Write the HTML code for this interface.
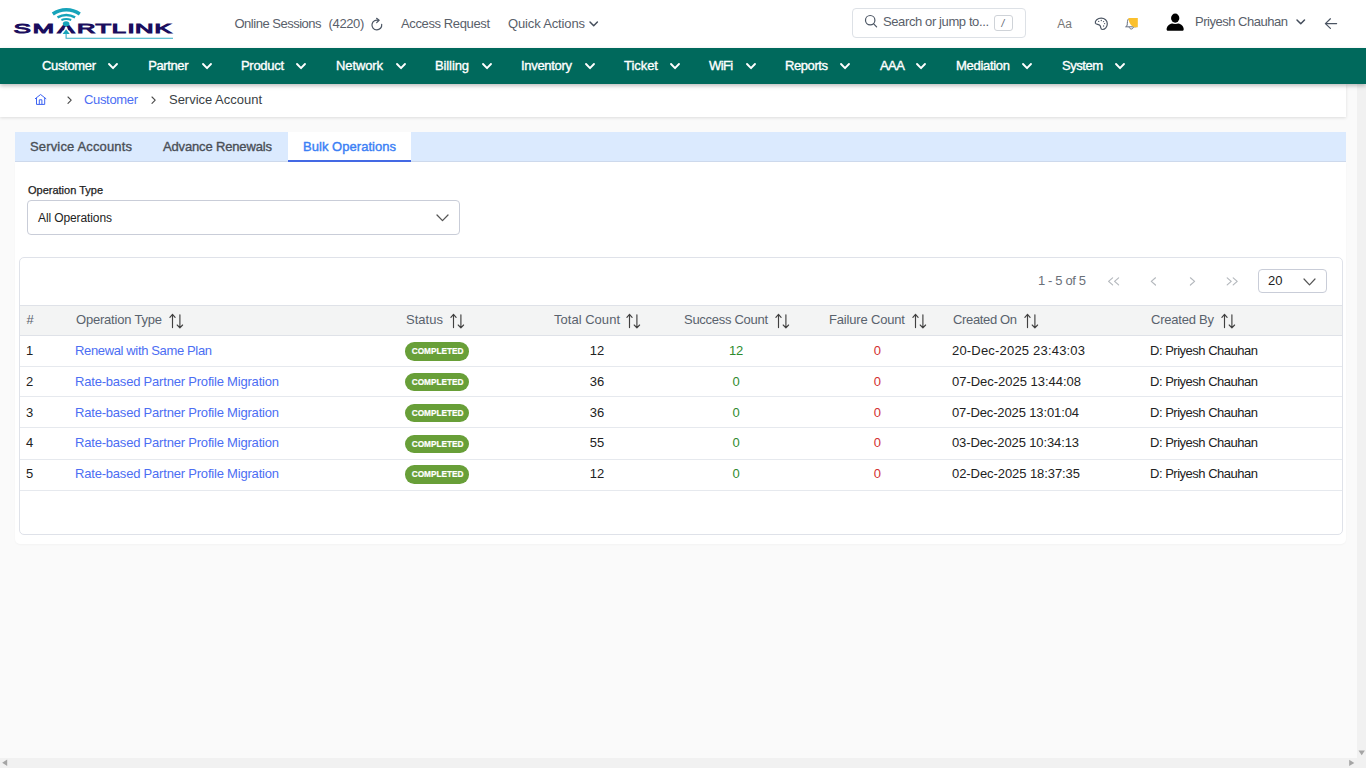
<!DOCTYPE html>
<html lang="en">
<head>
<meta charset="utf-8">
<title>Service Account - Bulk Operations</title>
<style>
*{box-sizing:border-box;margin:0;padding:0}
html,body{width:1366px;height:768px;overflow:hidden;background:#fafafa;font-family:"Liberation Sans",sans-serif;font-size:13px;color:#333}
#root{position:relative;width:1366px;height:768px;overflow:hidden}
.abs{position:absolute}
.t{z-index:2;position:absolute;white-space:nowrap;line-height:16px;height:16px}
svg{position:absolute;overflow:visible}
/* header */
#hdr{left:0;top:0;width:1366px;height:48px;background:#fff}
.ht{color:#59606a;font-size:13px}
/* nav */
#nav{z-index:3;left:0;top:48px;width:1366px;height:36px;background:#00695c;box-shadow:0 2px 4px rgba(0,0,0,.25)}
.nt{z-index:4;color:#fff;font-size:13px;top:10px;-webkit-text-stroke:.35px #fff}
/* breadcrumb */
#bc{left:0;top:84px;width:1346px;height:33px;background:#fff;box-shadow:0 1px 3px rgba(0,0,0,.12)}
/* scrollbars */
#vsb{left:1357.2px;top:84px;width:9px;height:684px;background:#f1f1f1}
#hsb{left:0;top:758px;width:1366px;height:10px;background:#f1f1f1}
/* tabs */
#tabs{left:15.2px;top:132px;width:1330.5px;height:30px;background:#dbeafe;border-bottom:1px solid #cdd9ec}
#tabact{left:287.6px;top:132px;width:123.3px;height:29.6px;background:#fff;border-bottom:2px solid #4469e4}
.tab{font-size:13px;color:#4a4f57;top:139px;-webkit-text-stroke:.35px #4a4f57}
#panel{left:15.2px;top:162px;width:1330.5px;height:382.2px;background:#fff;border-radius:0 0 5px 5px;box-shadow:0 1px 2px rgba(0,0,0,.03)}
#sel{left:27px;top:200.2px;width:433px;height:34.4px;border:1px solid #c9cdd8;border-radius:4px;background:#fff}
#card{left:19px;top:256.5px;width:1324px;height:278.5px;border:1px solid #dfe2e9;border-radius:5px;background:#fff}
#thead{left:20px;top:305px;width:1322px;height:31px;background:#f3f4f4;border-top:1px solid #dfe2e8;border-bottom:1px solid #dfe2e8}
.rl{left:20px;width:1322px;height:1px;background:#e6e9ee}
.th{font-size:13px;color:#59626d;top:312px}
.td{font-size:13px;color:#222}
.lnk{color:#4c6ef3}
.g{color:#2e8b2e}
.r{color:#d32f2f}
.badge{position:absolute;left:405px;width:64.3px;height:18.4px;border-radius:9.2px;background:#689f38;color:#fff;font-size:8.8px;font-weight:bold;line-height:18.6px;text-align:center;z-index:2}
.badge span{display:inline-block;transform:scaleX(.94);transform-origin:50% 50%;margin:0 -4px;-webkit-text-stroke:.2px #fff}
#psel{left:1258px;top:269px;width:68.6px;height:24.4px;border:1px solid #c9cdd8;border-radius:4px;background:#fff}
</style>
</head>
<body>
<div id="root">
<div id="hdr" class="abs"></div>
<div id="nav" class="abs"></div>
<div id="bc" class="abs"></div>
<div id="vsb" class="abs"></div>
<div id="hsb" class="abs"></div>
<div id="tabs" class="abs"></div>
<div id="tabact" class="abs"></div>
<div id="panel" class="abs"></div>
<div id="sel" class="abs"></div>
<div id="card" class="abs"></div>
<div id="thead" class="abs"></div>
<div id="psel" class="abs"></div>
<span class="t ht" style="left:234.50px;top:15.50px;font-size:13px;letter-spacing:-0.490px;">Online Sessions</span>
<span class="t ht" style="left:328.60px;top:15.50px;font-size:13px;letter-spacing:-0.376px;">(4220)</span>
<span class="t ht" style="left:401.00px;top:15.50px;font-size:13px;letter-spacing:-0.380px;">Access Request</span>
<span class="t ht" style="left:508.00px;top:15.50px;font-size:13px;letter-spacing:-0.147px;">Quick Actions</span>
<span class="t ht" style="left:883.00px;top:13.50px;font-size:13px;letter-spacing:-0.392px;">Search or jump to...</span>
<span class="t ht" style="left:1001.50px;top:15.84px;font-size:10px;letter-spacing:0.000px;font-style:italic">/</span>
<span class="t ht" style="left:1057.30px;top:16.14px;font-size:12px;letter-spacing:0.000px;color:#777">Aa</span>
<span class="t ht" style="left:1195.00px;top:13.50px;font-size:13px;letter-spacing:-0.481px;">Priyesh Chauhan</span>
<span class="t nt" style="left:42.00px;top:57.50px;font-size:13px;letter-spacing:-0.337px;">Customer</span>
<span class="t nt" style="left:148.20px;top:57.50px;font-size:13px;letter-spacing:-0.390px;">Partner</span>
<span class="t nt" style="left:241.00px;top:57.50px;font-size:13px;letter-spacing:-0.302px;">Product</span>
<span class="t nt" style="left:336.00px;top:57.50px;font-size:13px;letter-spacing:-0.115px;">Network</span>
<span class="t nt" style="left:435.00px;top:57.50px;font-size:13px;letter-spacing:-0.115px;">Billing</span>
<span class="t nt" style="left:521.00px;top:57.50px;font-size:13px;letter-spacing:-0.311px;">Inventory</span>
<span class="t nt" style="left:624.00px;top:57.50px;font-size:13px;letter-spacing:-0.041px;">Ticket</span>
<span class="t nt" style="left:709.00px;top:57.50px;font-size:13px;letter-spacing:-0.600px;">WiFi</span>
<span class="t nt" style="left:785.00px;top:57.50px;font-size:13px;letter-spacing:-0.422px;">Reports</span>
<span class="t nt" style="left:880.00px;top:57.50px;font-size:13px;letter-spacing:-0.600px;">AAA</span>
<span class="t nt" style="left:956.00px;top:57.50px;font-size:13px;letter-spacing:-0.297px;">Mediation</span>
<span class="t nt" style="left:1062.00px;top:57.50px;font-size:13px;letter-spacing:-0.469px;">System</span>
<span class="t lnk" style="left:84.00px;top:91.50px;font-size:13px;letter-spacing:-0.337px;">Customer</span>
<span class="t " style="left:169.00px;top:91.50px;font-size:13px;letter-spacing:-0.016px;color:#3a3f45">Service Account</span>
<span class="t tab" style="left:30.00px;top:138.50px;font-size:13px;letter-spacing:0.152px;">Service Accounts</span>
<span class="t tab" style="left:163.00px;top:138.50px;font-size:13px;letter-spacing:-0.153px;">Advance Renewals</span>
<span class="t tab" style="left:303.00px;top:138.50px;font-size:13px;letter-spacing:0.036px;color:#3b7ff5;-webkit-text-stroke:.4px #3b7ff5">Bulk Operations</span>
<span class="t " style="left:28.00px;top:182.19px;font-size:11px;letter-spacing:-0.001px;color:#222;-webkit-text-stroke:.25px #222">Operation Type</span>
<span class="t " style="left:38.00px;top:209.84px;font-size:12px;letter-spacing:-0.106px;color:#222">All Operations</span>
<span class="t " style="left:1038.00px;top:273.00px;font-size:13px;letter-spacing:-0.368px;color:#6a7079">1 - 5 of 5</span>
<span class="t " style="left:1268.00px;top:273.00px;font-size:13px;letter-spacing:0.000px;color:#222">20</span>
<span class="t th" style="left:26.50px;top:312.00px;font-size:13px;letter-spacing:0.000px;">#</span>
<span class="t th" style="left:76.00px;top:312.00px;font-size:13px;letter-spacing:-0.204px;">Operation Type</span>
<span class="t th" style="left:406.00px;top:312.00px;font-size:13px;letter-spacing:0.028px;">Status</span>
<span class="t th" style="left:554.00px;top:312.00px;font-size:13px;letter-spacing:0.023px;">Total Count</span>
<span class="t th" style="left:684.00px;top:312.00px;font-size:13px;letter-spacing:-0.286px;">Success Count</span>
<span class="t th" style="left:829.00px;top:312.00px;font-size:13px;letter-spacing:-0.171px;">Failure Count</span>
<span class="t th" style="left:953.00px;top:312.00px;font-size:13px;letter-spacing:-0.356px;">Created On</span>
<span class="t th" style="left:1151.00px;top:312.00px;font-size:13px;letter-spacing:-0.227px;">Created By</span>
<span class="t td" style="left:26.00px;top:343.00px;font-size:13px;letter-spacing:0.000px;">1</span>
<span class="t td lnk" style="left:75.00px;top:343.00px;font-size:13px;letter-spacing:-0.359px;">Renewal with Same Plan</span>
<span class="t td" style="left:589.70px;top:343.00px;font-size:13px;letter-spacing:0.000px;">12</span>
<span class="t td g" style="left:728.90px;top:343.00px;font-size:13px;letter-spacing:0.000px;">12</span>
<span class="t td r" style="left:873.80px;top:343.00px;font-size:13px;letter-spacing:0.000px;">0</span>
<span class="t td" style="left:952.00px;top:343.00px;font-size:13px;letter-spacing:0.191px;">20-Dec-2025 23:43:03</span>
<span class="t td" style="left:1150.00px;top:343.00px;font-size:13px;letter-spacing:-0.491px;">D: Priyesh Chauhan</span>
<span class="t td" style="left:26.00px;top:373.80px;font-size:13px;letter-spacing:0.000px;">2</span>
<span class="t td lnk" style="left:75.00px;top:373.80px;font-size:13px;letter-spacing:-0.200px;">Rate-based Partner Profile Migration</span>
<span class="t td" style="left:589.70px;top:373.80px;font-size:13px;letter-spacing:0.000px;">36</span>
<span class="t td g" style="left:732.60px;top:373.80px;font-size:13px;letter-spacing:0.000px;">0</span>
<span class="t td r" style="left:873.80px;top:373.80px;font-size:13px;letter-spacing:0.000px;">0</span>
<span class="t td" style="left:952.00px;top:373.80px;font-size:13px;letter-spacing:-0.020px;">07-Dec-2025 13:44:08</span>
<span class="t td" style="left:1150.00px;top:373.80px;font-size:13px;letter-spacing:-0.491px;">D: Priyesh Chauhan</span>
<span class="t td" style="left:26.00px;top:404.50px;font-size:13px;letter-spacing:0.000px;">3</span>
<span class="t td lnk" style="left:75.00px;top:404.50px;font-size:13px;letter-spacing:-0.200px;">Rate-based Partner Profile Migration</span>
<span class="t td" style="left:589.70px;top:404.50px;font-size:13px;letter-spacing:0.000px;">36</span>
<span class="t td g" style="left:732.60px;top:404.50px;font-size:13px;letter-spacing:0.000px;">0</span>
<span class="t td r" style="left:873.80px;top:404.50px;font-size:13px;letter-spacing:0.000px;">0</span>
<span class="t td" style="left:952.00px;top:404.50px;font-size:13px;letter-spacing:-0.125px;">07-Dec-2025 13:01:04</span>
<span class="t td" style="left:1150.00px;top:404.50px;font-size:13px;letter-spacing:-0.491px;">D: Priyesh Chauhan</span>
<span class="t td" style="left:26.00px;top:434.90px;font-size:13px;letter-spacing:0.000px;">4</span>
<span class="t td lnk" style="left:75.00px;top:434.90px;font-size:13px;letter-spacing:-0.200px;">Rate-based Partner Profile Migration</span>
<span class="t td" style="left:589.70px;top:434.90px;font-size:13px;letter-spacing:0.000px;">55</span>
<span class="t td g" style="left:732.60px;top:434.90px;font-size:13px;letter-spacing:0.000px;">0</span>
<span class="t td r" style="left:873.80px;top:434.90px;font-size:13px;letter-spacing:0.000px;">0</span>
<span class="t td" style="left:952.00px;top:434.90px;font-size:13px;letter-spacing:-0.125px;">03-Dec-2025 10:34:13</span>
<span class="t td" style="left:1150.00px;top:434.90px;font-size:13px;letter-spacing:-0.491px;">D: Priyesh Chauhan</span>
<span class="t td" style="left:26.00px;top:466.00px;font-size:13px;letter-spacing:0.000px;">5</span>
<span class="t td lnk" style="left:75.00px;top:466.00px;font-size:13px;letter-spacing:-0.200px;">Rate-based Partner Profile Migration</span>
<span class="t td" style="left:589.70px;top:466.00px;font-size:13px;letter-spacing:0.000px;">12</span>
<span class="t td g" style="left:732.60px;top:466.00px;font-size:13px;letter-spacing:0.000px;">0</span>
<span class="t td r" style="left:873.80px;top:466.00px;font-size:13px;letter-spacing:0.000px;">0</span>
<span class="t td" style="left:952.00px;top:466.00px;font-size:13px;letter-spacing:-0.072px;">02-Dec-2025 18:37:35</span>
<span class="t td" style="left:1150.00px;top:466.00px;font-size:13px;letter-spacing:-0.491px;">D: Priyesh Chauhan</span>
<svg style="left:0;top:0" width="200" height="48" viewBox="0 0 200 48">
<g fill="none" stroke="#16a3ba" stroke-linecap="butt">
<path d="M52.8 14.0 A23.3 23.3 0 0 1 79.8 14.0" stroke-width="3.4"/>
<path d="M57.5 17.4 A17.9 17.9 0 0 1 75.1 17.4" stroke-width="2.5"/>
<path d="M61.4 20.0 A13.9 13.9 0 0 1 71.2 20.0" stroke-width="1.9"/>
</g>
<g transform="translate(0,33.1) scale(1.88,1)" font-family="'Liberation Sans',sans-serif" font-size="13.6" fill="#1a0e5e" stroke="#1a0e5e" stroke-width="1.5" stroke-linejoin="miter">
<text y="0" x="7.35 17.42 30.61 40.97 50.77 59.46 67.78 71.78 82.22" style="vector-effect:non-scaling-stroke" vector-effect="non-scaling-stroke">SMARTLINK</text>
</g>
<path d="M61.3 33.9 L66.1 26.6 L70.9 33.9 Z" fill="#fff"/>
<ellipse cx="66.1" cy="23.8" rx="3.3" ry="2.5" fill="#16a3ba"/>
<path d="M62.6 34 L66.1 29.2 L69.7 34 Z" fill="#16a3ba"/>
<path d="M66.1 33.5 V38.25 H173" fill="none" stroke="#35aec6" stroke-width="1.1"/>
</svg>
<svg style="left:368px;top:14px" width="20" height="20" viewBox="368 14 20 20"><g fill="none" stroke="#4b5563" stroke-width="1.2" stroke-linecap="round" stroke-linejoin="round">
<path d="M381.7 24.3 A4.9 4.9 0 1 1 378.6 20.4"/><path d="M376.6 18.3 L379.1 20.3 L376.7 22.6"/></g></svg>
<svg style="left:588.30px;top:19.85px" width="11.4" height="7.7" viewBox="-5.7 -3.85 11.4 7.7"><path d="M-3.7 -1.85 L0 1.85 L3.7 -1.85" fill="none" stroke="#454e5c" stroke-width="1.5" stroke-linecap="round" stroke-linejoin="round"/></svg>
<div class="abs" style="left:852px;top:8px;width:174px;height:30px;border:1px solid #dde1e6;border-radius:4px;background:#fff"></div>
<svg style="left:862px;top:12px" width="18" height="18" viewBox="862 12 18 18"><g fill="none" stroke="#4b5563" stroke-width="1.2" stroke-linecap="round"><circle cx="870.2" cy="20.2" r="4.7"/><path d="M873.7 23.8 L876.6 26.8"/></g></svg>
<div class="abs" style="left:994px;top:15px;width:19px;height:15.5px;border:1px solid #cfd3d8;border-radius:3px;background:#fff"></div>
<svg style="left:1092px;top:15px" width="18" height="18" viewBox="1092 15 18 18"><path d="M1095.4 23.2 C1094.7 20.6 1097.6 18.2 1101.2 18.2 C1104.7 18.2 1107.3 20.6 1107.3 23.8 C1107.3 27 1105 29.5 1102.4 29.5 C1100.6 29.5 1100.9 27.6 1100.3 26 C1099.6 24.2 1096 24.6 1095.4 23.2 Z" fill="none" stroke="#4b5563" stroke-width="1.2"/>
<g fill="#4b5563"><circle cx="1098.7" cy="21.4" r=".65"/><circle cx="1101.3" cy="20.5" r=".65"/><circle cx="1103.6" cy="21.6" r=".65"/><circle cx="1104.6" cy="23.6" r=".65"/><circle cx="1103.6" cy="26" r=".65"/></g></svg>
<svg style="left:1120px;top:14px" width="22" height="20" viewBox="1120 14 22 20"><g fill="none" stroke="#667080" stroke-width="1" stroke-linecap="round" stroke-linejoin="round"><path d="M1128.2 19.2 C1127.3 20.4 1127.4 22.5 1127.2 25 C1127.1 26 1126.4 26.6 1125.6 26.8 H1136 "/><path d="M1129.3 27.6 C1130 29.6 1132.6 29.6 1133.3 27.6"/></g>
<path d="M1128.4 18 H1137.8 V27.3 H1134.6 C1131 26.4 1128.8 22.5 1128.4 18 Z" fill="#fbc02d"/></svg>
<svg style="left:1164px;top:11px" width="22" height="22" viewBox="1164 11 22 22"><path d="M1166.6 29.3 C1166.6 26.2 1169.2 23.9 1172 23.5 H1178.4 C1181.2 23.9 1183.7 26.2 1183.7 29.3 C1183.7 30.3 1183 30.8 1182.2 30.8 H1168.1 C1167.3 30.8 1166.6 30.3 1166.6 29.3 Z" fill="#000"/>
<ellipse cx="1175.2" cy="18.2" rx="5.3" ry="5.8" fill="#fff"/><ellipse cx="1175.2" cy="18.1" rx="4.15" ry="4.55" fill="#000"/></svg>
<svg style="left:1295.15px;top:17.60px" width="11.5" height="7.8" viewBox="-5.75 -3.9 11.5 7.8"><path d="M-3.75 -1.9 L0 1.9 L3.75 -1.9" fill="none" stroke="#454e5c" stroke-width="1.5" stroke-linecap="round" stroke-linejoin="round"/></svg>
<svg style="left:1322px;top:14px" width="18" height="18" viewBox="1322 14 18 18"><path d="M1336.6 23.6 H1325.4 M1330.4 18.8 L1325.4 23.6 L1330.4 28.4" fill="none" stroke="#4b5563" stroke-width="1.25" stroke-linecap="round" stroke-linejoin="round"/></svg>
<svg style="z-index:4;left:107.30px;top:62.00px" width="12" height="8.2" viewBox="-6.0 -4.1 12 8.2"><path d="M-4.0 -2.1 L0 2.1 L4.0 -2.1" fill="none" stroke="#fff" stroke-width="1.9" stroke-linecap="round" stroke-linejoin="round"/></svg>
<svg style="z-index:4;left:200.50px;top:62.00px" width="12" height="8.2" viewBox="-6.0 -4.1 12 8.2"><path d="M-4.0 -2.1 L0 2.1 L4.0 -2.1" fill="none" stroke="#fff" stroke-width="1.9" stroke-linecap="round" stroke-linejoin="round"/></svg>
<svg style="z-index:4;left:295.00px;top:62.00px" width="12" height="8.2" viewBox="-6.0 -4.1 12 8.2"><path d="M-4.0 -2.1 L0 2.1 L4.0 -2.1" fill="none" stroke="#fff" stroke-width="1.9" stroke-linecap="round" stroke-linejoin="round"/></svg>
<svg style="z-index:4;left:395.00px;top:62.00px" width="12" height="8.2" viewBox="-6.0 -4.1 12 8.2"><path d="M-4.0 -2.1 L0 2.1 L4.0 -2.1" fill="none" stroke="#fff" stroke-width="1.9" stroke-linecap="round" stroke-linejoin="round"/></svg>
<svg style="z-index:4;left:481.00px;top:62.00px" width="12" height="8.2" viewBox="-6.0 -4.1 12 8.2"><path d="M-4.0 -2.1 L0 2.1 L4.0 -2.1" fill="none" stroke="#fff" stroke-width="1.9" stroke-linecap="round" stroke-linejoin="round"/></svg>
<svg style="z-index:4;left:584.00px;top:62.00px" width="12" height="8.2" viewBox="-6.0 -4.1 12 8.2"><path d="M-4.0 -2.1 L0 2.1 L4.0 -2.1" fill="none" stroke="#fff" stroke-width="1.9" stroke-linecap="round" stroke-linejoin="round"/></svg>
<svg style="z-index:4;left:669.00px;top:62.00px" width="12" height="8.2" viewBox="-6.0 -4.1 12 8.2"><path d="M-4.0 -2.1 L0 2.1 L4.0 -2.1" fill="none" stroke="#fff" stroke-width="1.9" stroke-linecap="round" stroke-linejoin="round"/></svg>
<svg style="z-index:4;left:745.00px;top:62.00px" width="12" height="8.2" viewBox="-6.0 -4.1 12 8.2"><path d="M-4.0 -2.1 L0 2.1 L4.0 -2.1" fill="none" stroke="#fff" stroke-width="1.9" stroke-linecap="round" stroke-linejoin="round"/></svg>
<svg style="z-index:4;left:839.00px;top:62.00px" width="12" height="8.2" viewBox="-6.0 -4.1 12 8.2"><path d="M-4.0 -2.1 L0 2.1 L4.0 -2.1" fill="none" stroke="#fff" stroke-width="1.9" stroke-linecap="round" stroke-linejoin="round"/></svg>
<svg style="z-index:4;left:915.00px;top:62.00px" width="12" height="8.2" viewBox="-6.0 -4.1 12 8.2"><path d="M-4.0 -2.1 L0 2.1 L4.0 -2.1" fill="none" stroke="#fff" stroke-width="1.9" stroke-linecap="round" stroke-linejoin="round"/></svg>
<svg style="z-index:4;left:1021.00px;top:62.00px" width="12" height="8.2" viewBox="-6.0 -4.1 12 8.2"><path d="M-4.0 -2.1 L0 2.1 L4.0 -2.1" fill="none" stroke="#fff" stroke-width="1.9" stroke-linecap="round" stroke-linejoin="round"/></svg>
<svg style="z-index:4;left:1114.00px;top:62.00px" width="12" height="8.2" viewBox="-6.0 -4.1 12 8.2"><path d="M-4.0 -2.1 L0 2.1 L4.0 -2.1" fill="none" stroke="#fff" stroke-width="1.9" stroke-linecap="round" stroke-linejoin="round"/></svg>
<svg style="left:32px;top:91px" width="18" height="18" viewBox="32 91 18 18"><g fill="none" stroke="#3d63f2" stroke-width="1" stroke-linejoin="miter"><path d="M35 98.9 L40.6 94.5 L46.2 98.9"/><path d="M36.5 98 V104.4 H44.7 V98"/><path d="M39.3 104.4 V99.8 H41.9 V104.4"/></g></svg>
<svg style="left:65.50px;top:94.50px" width="7.2" height="10.4" viewBox="-3.6 -5.2 7.2 10.4"><path d="M-1.6 -3.2 L1.6 0 L-1.6 3.2" fill="none" stroke="#4a4a4a" stroke-width="1.1" stroke-linecap="round" stroke-linejoin="round"/></svg>
<svg style="left:150.00px;top:94.50px" width="7.2" height="10.4" viewBox="-3.6 -5.2 7.2 10.4"><path d="M-1.6 -3.2 L1.6 0 L-1.6 3.2" fill="none" stroke="#4a4a4a" stroke-width="1.1" stroke-linecap="round" stroke-linejoin="round"/></svg>
<svg style="left:435.10px;top:213.10px" width="15" height="9.6" viewBox="-7.5 -4.8 15 9.6"><path d="M-5.5 -2.8 L0 2.8 L5.5 -2.8" fill="none" stroke="#555" stroke-width="1.3" stroke-linecap="round" stroke-linejoin="round"/></svg>
<svg style="left:1302.00px;top:276.50px" width="15" height="9.8" viewBox="-7.5 -4.9 15 9.8"><path d="M-5.5 -2.9 L0 2.9 L5.5 -2.9" fill="none" stroke="#555" stroke-width="1.2" stroke-linecap="round" stroke-linejoin="round"/></svg>
<svg style="left:1100px;top:270px" width="150" height="24" viewBox="1100 270 150 24"><path d="M1112.6 277.9 L1108.6 281.4 L1112.6 284.9 M1118.6 277.9 L1114.6 281.4 L1118.6 284.9 M1155.5 277.79999999999995 L1151.3 281.4 L1155.5 285.0 M1190.4 277.79999999999995 L1194.6000000000001 281.4 L1190.4 285.0 M1227.2 277.9 L1231.2 281.4 L1227.2 284.9 M1233.2 277.9 L1237.2 281.4 L1233.2 284.9" fill="none" stroke="#b4b8bd" stroke-width="1.2" stroke-linecap="round" stroke-linejoin="round"/></svg>
<svg style="left:166.6px;top:311px" width="18" height="20" viewBox="166.6 311 18 20"><path d="M172.1 327.6 V314.4 M169.5 317.3 L172.1 314.3 L174.7 317.3 M179.5 314.7 V327.7 M176.8 325 L179.5 327.8 L182.2 325" fill="none" stroke="#404040" stroke-width="1.15" stroke-linecap="round" stroke-linejoin="round"/></svg>
<svg style="left:447.5px;top:311px" width="18" height="20" viewBox="447.5 311 18 20"><path d="M453.0 327.6 V314.4 M450.4 317.3 L453.0 314.3 L455.6 317.3 M460.4 314.7 V327.7 M457.7 325 L460.4 327.8 L463.09999999999997 325" fill="none" stroke="#404040" stroke-width="1.15" stroke-linecap="round" stroke-linejoin="round"/></svg>
<svg style="left:623.9px;top:311px" width="18" height="20" viewBox="623.9 311 18 20"><path d="M629.4 327.6 V314.4 M626.8 317.3 L629.4 314.3 L632.0 317.3 M636.8 314.7 V327.7 M634.0999999999999 325 L636.8 327.8 L639.5 325" fill="none" stroke="#404040" stroke-width="1.15" stroke-linecap="round" stroke-linejoin="round"/></svg>
<svg style="left:772.9px;top:311px" width="18" height="20" viewBox="772.9 311 18 20"><path d="M778.4 327.6 V314.4 M775.8 317.3 L778.4 314.3 L781.0 317.3 M785.8 314.7 V327.7 M783.0999999999999 325 L785.8 327.8 L788.5 325" fill="none" stroke="#404040" stroke-width="1.15" stroke-linecap="round" stroke-linejoin="round"/></svg>
<svg style="left:909.9px;top:311px" width="18" height="20" viewBox="909.9 311 18 20"><path d="M915.4 327.6 V314.4 M912.8 317.3 L915.4 314.3 L918.0 317.3 M922.8 314.7 V327.7 M920.0999999999999 325 L922.8 327.8 L925.5 325" fill="none" stroke="#404040" stroke-width="1.15" stroke-linecap="round" stroke-linejoin="round"/></svg>
<svg style="left:1021.5px;top:311px" width="18" height="20" viewBox="1021.5 311 18 20"><path d="M1027.0 327.6 V314.4 M1024.4 317.3 L1027.0 314.3 L1029.6 317.3 M1034.4 314.7 V327.7 M1031.7 325 L1034.4 327.8 L1037.1000000000001 325" fill="none" stroke="#404040" stroke-width="1.15" stroke-linecap="round" stroke-linejoin="round"/></svg>
<svg style="left:1218.6px;top:311px" width="18" height="20" viewBox="1218.6 311 18 20"><path d="M1224.1 327.6 V314.4 M1221.5 317.3 L1224.1 314.3 L1226.6999999999998 317.3 M1231.5 314.7 V327.7 M1228.8 325 L1231.5 327.8 L1234.2 325" fill="none" stroke="#404040" stroke-width="1.15" stroke-linecap="round" stroke-linejoin="round"/></svg>
<div class="abs rl" style="top:365.8px"></div>
<div class="abs rl" style="top:396.4px"></div>
<div class="abs rl" style="top:426.8px"></div>
<div class="abs rl" style="top:458.9px"></div>
<div class="abs rl" style="top:489.7px"></div>
<div class="badge" style="top:342.2px"><span>COMPLETED</span></div>
<div class="badge" style="top:373px"><span>COMPLETED</span></div>
<div class="badge" style="top:404px"><span>COMPLETED</span></div>
<div class="badge" style="top:434.7px"><span>COMPLETED</span></div>
<div class="badge" style="top:465.4px"><span>COMPLETED</span></div>
<svg style="left:0;top:748px;z-index:5" width="1366" height="20" viewBox="0 748 1366 20"><g fill="#a5a5a5"><path d="M2.2 762.8 L7.2 759.6 V766 Z"/><path d="M1354.3 762.9 L1349.2 759.7 V766.1 Z"/><path d="M1358.5 750.4 H1364.9 L1361.7 755.3 Z"/></g></svg>
</div>
</body>
</html>
